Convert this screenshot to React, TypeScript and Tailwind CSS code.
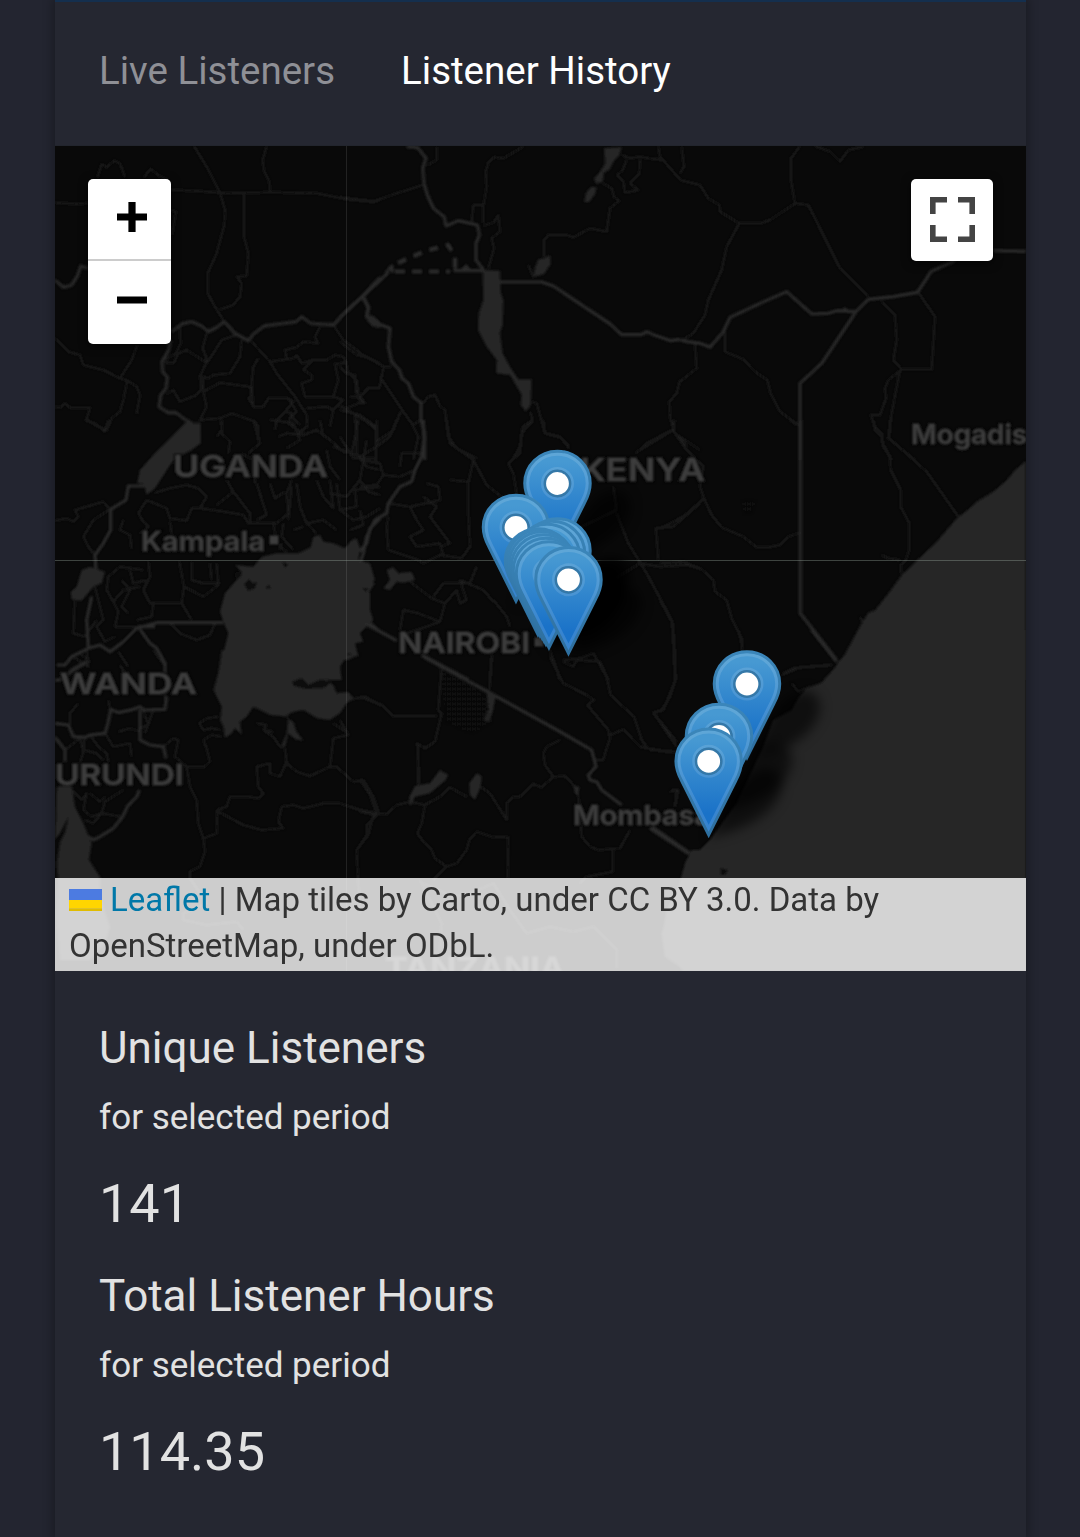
import React from "react";

type RegionData = {
  at: string;
  water?: string;
  border?: string;
  minor?: string;
};

/* Map line work, split in regions; every region is drawn at a third of its own units. */
const regions: RegionData[] = [
  {
    at: "translate(40 140) scale(0.33333)",
    water: "M395 900L425 870L455 850L475 848L482 900Z M985 525L1000 530L1020 545V565L995 558L980 540Z",
    border:
      "M45 420L70 442L95 435L112 408L122 378L145 385 M395 575L425 552L455 545L485 558L505 575L530 562L553 545L585 580L625 602L640 582L672 558L730 550L768 545L785 530L812 550L880 555L922 510L968 468L1020 412 M968 468L985 500L980 530L1000 545 M392 600L385 632L366 665L368 695L382 712L378 745L362 765L357 800L385 818L408 818L430 835L458 852",
    minor:
      "M462 18L500 80L540 158L555 210L553 255L530 340L503 400L503 460L525 500L553 545 M680 18L668 60L672 92L688 125L690 158 M45 188L110 192L145 190 M393 150L470 153L560 160L700 157L830 160L920 178L1000 186L1020 180 M612 160L612 290L625 340L620 408L590 410L605 430L600 470L580 495L540 508 M172 112L185 72L200 82L222 62L240 70L255 112 M312 112L332 86L355 106L380 118 M393 210L408 215L396 285 M45 595L85 635L120 645L130 675L190 690L240 715L275 660L292 615 M240 715L262 722L250 780L240 815L215 835L200 870L165 855L140 838L150 803L90 803L75 790L60 803L45 800 M262 722L290 740L300 765L290 822 M420 560L422 610L408 640L380 655L378 668L402 668L415 640L440 630L490 662L500 665 M500 580L488 625L498 650L500 665L480 710L485 745L470 765L420 785L400 750L380 762 M590 585L545 600L520 640L500 670 M605 600L600 650L570 700L520 705L505 715L490 710L490 755L500 750L540 728L630 740L635 765L625 775L640 798 M490 755L500 800L480 840L540 835L575 820L645 845L655 860V900 M635 605L690 665L710 700L765 770L800 825L802 860L780 875L745 850L755 820L735 815L760 785L745 775L685 775L670 800L640 800L635 730L640 680L655 655 M690 665L760 655L770 645L785 670L820 660L860 660L885 645L910 650L918 668L885 672L895 720L880 770L910 780L880 810L870 860 M740 655L735 630L770 622L790 605L835 610L825 590L840 560 M820 660L790 690L815 705L815 720L785 730L795 770L880 770 M880 555L910 600L950 630L975 650L1020 670 M918 668L925 700L950 720L955 760L970 790L950 770L930 770 M920 808L980 845L1010 870V900 M955 840L945 900 M800 805L860 800L880 810 M705 870L710 840L740 812 M545 840V870L530 890 M745 775L770 815L755 830L780 855 M1020 745L985 745L960 770 M715 890L740 880L790 885L830 870L870 900",
  },
  {
    at: "translate(340 140) scale(0.33333)",
    water:
      "M792 25L845 22L838 45L820 65L808 90L792 98L788 125L768 132L762 115L780 95L795 70Z M738 160L752 140L770 142L765 162L748 186L732 186Z M595 358L612 355L630 345L632 372L612 402L580 412L585 382Z M428 390L480 392L482 455L490 480L488 555L480 580L488 640L510 680L535 718H575L572 795L558 815L542 795L545 765L510 705L468 700L470 660L440 620L414 570L416 520L430 480Z M80 530L98 526L122 548L105 560L88 548Z",
    border:
      "M200 20L232 22L258 55L248 85L252 130L262 165L280 205L312 230L318 258L355 242L412 255L418 285L408 310L408 360L432 392 M345 376L345 392H430 M365 392L378 378L388 392 M0 532L145 398 M138 398L155 378L158 398 M480 426H605L640 438L740 505L808 550L845 584H905L920 575L940 584L992 602L1020 598 M68 468L85 505L80 530L110 550L150 565L145 620L155 665L178 690L186 715L205 730L220 770L243 788V840L254 880V960",
    minor:
      "M550 20L490 55L462 52L445 68L437 95L440 140L430 200L430 250 M0 172L100 184L170 160L248 135 M290 20V60L262 76 M430 195H400L395 245 M430 257L460 248L475 225L480 275L455 295L462 325L445 385 M612 350L612 300L625 285H680L700 292L750 265L800 275L810 205L837 183L822 170L815 145L790 130 M845 45L870 55L900 50L925 55L970 60 M900 60L898 100L870 130L895 150L855 158L850 125L832 105L848 90L860 60 M955 20L960 50L1020 118 M565 375L580 412 M0 605L50 645L80 650L130 680H155 M0 680L18 700L45 705L48 755L75 788L55 790L18 805L0 798 M0 810L60 825L108 860V960 M130 685L118 745H85L65 765 M120 710L190 815L215 850L235 890L220 960 M240 800L265 770L285 765L300 798L315 810L325 890L350 925L410 955 M240 800V840L220 855 M182 815L160 870L110 905 M575 785L590 790L615 880L660 892L688 918 M570 815L578 840L548 860L540 920L520 955 M1020 720L1010 760L988 785L990 830L1000 868L920 910L888 940 M45 820L48 880L35 940 M0 890L40 955H110",
  },
  {
    at: "translate(680 140) scale(0.33333)",
    border:
      "M0 600L22 605L60 610L90 622L130 575L150 532L240 490L320 455L395 522L445 520L470 512L528 515L565 478L640 470L712 457L740 415L752 395L825 362 M528 515L425 670L360 730V960 M940 332L1038 334 M490 505L505 515",
    minor:
      "M0 120L60 135L85 175L118 195L120 215L178 250H240L270 240L345 190L385 195L430 285L480 385L565 470 M178 250L140 320L125 390L85 480L75 525L40 580L10 598 M345 190L333 120V55L360 18 M405 18L450 35L480 65L505 30L550 20 M5 20L12 80L0 100 M135 560V635L190 658L225 695L262 720L272 760L300 815L355 855 M45 612L50 685L0 725 M605 485L645 525L650 600L640 660L665 688H755L765 530L715 457 M665 688L625 720L615 745L618 775L600 825L572 825L585 860L605 880L608 910L635 960 M660 690L635 820L625 895L705 960 M0 890L20 920",
  },
  {
    at: "translate(40 420) scale(0.33333)",
    water:
      "M440 5L460 15L482 8V70L455 90L400 120L345 205L320 225L312 192L292 188L300 150L340 105Z M125 450L150 440L195 455L185 490L160 500L125 542L95 538L92 515L110 500Z M585 435L640 440L665 410L710 400L775 400L812 382L820 350L840 345L850 365L880 370L915 385L935 360L950 355L960 385L955 420L990 430L1005 480L975 500L990 520V570L1000 600L960 640L970 665L945 670L955 710L925 700L900 740L905 780H530L545 720L565 640L552 610L540 575L555 520L590 480L605 455Z",
    border:
      "M318 198H265L258 240L212 268V330L190 370L165 405L168 450 M155 530L140 600L145 680 M50 735L75 735L95 710L145 685L180 675L210 695L250 665L290 625L350 608H550 M300 628L330 670L350 685L375 730V780 M295 620H345 M1020 295L990 325L980 370L958 395 M985 605L1020 635",
    minor:
      "M135 0L165 10L195 35L205 0 M45 302L80 295L100 305L115 290L105 270L190 245L210 268 M210 268L160 300L130 350L145 380L160 400 M320 240L380 265L390 295L440 302L455 265L480 265L500 230L475 205L440 195L390 205L345 218 M320 240L295 280L310 305L325 320L300 340 M250 300L240 330L270 345L275 385 M390 305L395 340 M480 265L555 275L610 285L625 310L660 310H710L745 280L740 220L755 180 M530 255L580 215L560 180 M580 215L630 280L632 310 M650 190L680 285L650 300 M690 190L705 235L735 215 M770 190L780 260L800 310L830 340 M800 310L850 300L890 330 M830 180L850 230L880 265L870 180 M890 190L900 270L950 260L945 210L1020 200 M900 270L940 300L980 290L1020 265 M870 220L920 230L960 180L985 215L1020 225 M860 90L870 140L900 180 M950 0V100L980 140L1020 150 M860 50L915 100 M980 60L960 180 M545 0V40L570 65L565 100 M640 0L660 70L625 100 M690 0L760 10L780 60L740 85 M800 20L770 50 M840 0L850 50 M700 310L710 370L740 395 M730 310L725 350L760 390 M790 320L760 330 M325 425L330 470L310 510L330 550L385 550H425L432 500L418 425 M432 500L490 530L535 495L530 430 M455 425V480L490 490H540 M425 550L455 600 M510 430L515 480 M310 450L240 440L205 470L200 510L220 545L250 510L300 500 M220 545L235 575L225 620L290 620 M340 550L335 590L290 600 M245 480L270 510L245 560L265 580 M270 450L280 490L320 480 M105 530L100 640L135 650 M165 500L190 600L170 620L195 665L225 650 M135 650L170 600 M390 610L420 640L470 660L510 645L525 610 M140 680L145 740L100 710 M235 695L265 740 M720 390L725 370 M755 200L745 300 M605 100L640 120L645 190 M880 80L960 110L1010 80V0 M930 330L970 315L960 270",
  },
  {
    at: "translate(360 420) scale(0.33333)",
    water:
      "M0 430L20 435L38 460L30 480L45 490L25 520V560L10 580L20 600L0 615Z M80 450L100 442L115 460L155 455L165 480L130 488L110 485L90 510L70 505L90 480Z",
    border:
      "M190 0L192 60L185 110L165 150L155 185L120 200L85 250L80 280L45 300L20 350L10 400L0 430 M15 610L110 662 M185 705L325 780",
    minor:
      "M260 0L270 70L340 120L380 195L430 235 M520 0L485 40L480 100L445 130L460 160L470 220 M550 0L555 40L600 50L628 85 M340 120L325 190L325 280L330 380L305 415L240 405L190 430L175 420L85 390L80 320L85 290 M85 250L150 260L240 240L235 200L200 190 M150 260L170 300L190 330L150 350L170 380L240 370L250 405 M190 230L230 260L210 290L270 370L240 380 M0 200L50 195L70 165L60 130L0 120 M70 165L120 170L165 150 M20 0L48 30V130 M110 0L90 50L50 80 M120 140L125 100L190 100 M270 180L325 185 M760 200L770 270L655 325 M770 280L805 370L860 460L935 600L945 700V780 M1020 250L940 320L888 325L895 420 M935 0L945 40L1020 90 M940 30L840 90 M750 485L840 430L900 440L980 435L1020 445 M120 630L130 570L175 580L240 605L255 550L215 535L170 500L150 485 M255 550L290 510L300 550L320 540L300 480 M240 605L200 620L140 640 M400 540L440 590L450 620 M300 480L370 510L400 545 M395 705L390 780 M570 690L600 780 M610 720L660 715L700 700L745 780 M220 530L250 490L330 490L350 440",
  },
  {
    at: "translate(660 420) scale(0.33333)",
    water: "M1098 122L1065 150L1040 180L1000 215L950 245L925 268L890 295L830 365L770 422L725 465L685 520L645 570L625 578L600 618L575 665L545 720L490 780H1098Z",
    border: "M421 0V580L530 720",
    minor:
      "M640 0L645 30L665 50L670 80L690 110L692 150L722 210V260L748 310V390L738 420L722 435V460 M690 0L688 55L800 155L895 290 M665 405L685 415L720 420 M0 50L38 30L45 0 M38 30L80 90L130 140L120 200L132 235L70 290L0 325 M132 235L155 285L185 322L250 350L290 382H325L360 375L385 350L420 338 M0 430L70 425L125 448L160 480L165 515L200 540L215 595L245 655V690 M0 540L38 610L42 700L48 780 M365 765L420 742L515 735 M600 590L610 610 M390 0L410 15",
  },
  {
    at: "translate(40 650) scale(0.33333)",
    water:
      "M545 0H900L920 15L960 12L925 30L905 30L890 75L850 85L880 105L890 130L925 125L940 145L920 160L900 190L870 210L830 205L790 180L760 185L735 200L760 215L770 245L790 272L765 268L745 250L735 290L725 285L740 250L745 200L690 195L640 170L620 200L600 215L605 255L585 235L575 250L555 265L550 230L540 210L545 170L530 140L520 120L535 70Z M50 410L95 405L105 470L130 520L155 580L147 630L180 680V740L210 830L195 880L150 930H60L50 800L55 700L50 640L60 575L75 545L85 500L60 550L45 570Z",
    border:
      "M45 92L75 85L95 60L140 35 M45 220L85 225L100 260L135 262L150 255L195 250L205 215L212 178L235 188L280 178L300 170L310 180L375 178L380 140 M300 180L300 270L330 285L370 290L378 325 M45 262L75 300V335 M298 420L290 440L262 470L248 500L220 535L180 560L160 570L145 560",
    minor:
      "M115 5L150 35L90 70 M240 45L265 85 M340 0L375 50V180 M115 160L90 190V225 M210 178L205 150 M310 180L325 225L300 235 M340 180L315 250 M75 300L120 265L130 305L120 340 M150 255L175 290L200 310L205 335 M195 250L220 290L270 280L275 320 M235 245L270 235L300 245 M135 262L130 300L170 310L190 330 M370 290L400 265L415 270L405 320L440 350H495L510 335L500 295L490 270L515 255L545 260 M540 240L515 235L490 240L478 220L500 205L535 200 M440 350L450 410L470 450L475 520L490 565L530 550L532 480L560 470L570 440H625L655 445L670 430L655 410L650 350L690 340V370L720 380L740 335L735 295 M735 335L770 365L810 378L870 350H890L940 395L970 390L1000 440L1015 485 M870 350L880 265L925 255L900 210 M925 250L880 220 M920 150L975 140L1020 165 M535 485L610 525L665 540L730 535L715 515L725 470L760 465L790 475L850 460H900L960 480L1020 492 M1000 495L985 555L950 600L955 700L960 790 M490 565L495 605L480 650L450 665V685L500 760L430 790V810L500 825L590 815L610 840 M95 420L125 450L140 430L130 480L155 500L185 490L160 520L135 510 M150 430L180 455L195 440 M185 490L195 455L250 420 M185 490L245 500 M670 240L700 260L720 290L735 290 M650 220L680 225L670 240L700 245",
  },
  {
    at: "translate(360 650) scale(0.33333)",
    water:
      "M380 130L408 135L398 185L388 215L370 210L385 180Z M240 360L265 375L255 392L210 430L165 440L150 470L148 440L165 408L210 400Z M350 370L365 378L362 410L345 450L330 435L328 400Z M640 405L658 412L655 440L645 430Z M995 600H1020V960L960 950L915 920L905 850L960 700L975 640Z",
    border: "M190 20L410 140L600 245L695 300L708 350L685 375L690 390L710 395L725 420L785 465 M875 530L990 610",
    minor:
      "M0 140L65 165L100 198H230 M245 50L235 180L245 190L225 275L195 295L172 280L178 400 M395 25L388 120 M175 280L175 410 M0 390L30 435L50 490L80 492L110 465L150 455L195 465L185 520L172 550L190 575L215 600L225 625L260 650L220 690 M0 485L50 495L20 525V555L0 585 M260 650L290 640L320 600L328 570L350 545L395 560L445 562L443 684 M195 465L240 440L270 412L320 440 M362 410L390 430L440 510V460L460 440H480L520 402L545 412L580 380L555 345L550 310L560 290L600 270 M580 380L615 378L645 410 M570 20L600 80L610 100L680 135L702 150L682 165L745 240L750 265L738 300L730 330L705 330 M745 258L790 238L840 290L920 305H960 M610 35L640 50L650 30L720 35L740 80L752 135L800 180L822 200L845 270L860 290 M945 0V95L910 180L880 188L950 275 M655 440L665 560L690 590L715 600L780 595L810 540 M758 600V665L680 680L660 700 M935 420L955 420L945 470 M190 700L280 740L330 730L400 700L450 780L500 850L570 830L640 845L700 830L740 870L770 900V955 M180 690L245 820L240 900",
  },
  {
    at: "translate(650 630) scale(0.33333)",
    water: "M625 0L600 60L565 95L545 135L510 160L470 175L445 205L425 240L370 270L340 350L260 520L180 630L150 660L115 680L100 720L85 770L50 840L40 900L60 980L100 1023H1128V0Z",
    border: "M485 0L560 95 M0 595L115 670",
    minor:
      "M70 0L75 150L60 200L35 240L10 248L80 350 M265 0L278 50 M400 130L430 115L545 105 M0 360L70 365 M60 485L80 480L75 530 M425 160L445 185L480 170",
  },
];

type Pt = { x: number; y: number };
/* Centre of each pin's white dot. */
const pins: Pt[] = [
  { x: 557.5, y: 483.5 },
  { x: 516, y: 527.5 },
  { x: 557.5, y: 551 },
  { x: 552, y: 553.5 },
  { x: 547, y: 556.5 },
  { x: 538, y: 561 },
  { x: 540, y: 562 },
  { x: 542, y: 564 },
  { x: 544, y: 567 },
  { x: 546, y: 570.5 },
  { x: 549, y: 574 },
  { x: 568.5, y: 579.8 },
  { x: 747, y: 684 },
  { x: 719, y: 736.5 },
  { x: 708.7, y: 761.3 },
];

function Pin({ x, y }: Pt) {
  return (
    <g transform={`translate(${x - 34.4} ${y - 34.8}) scale(2.75)`}>
      <path
        d="M12.5 .9C5.9 .9 .6 6.1 .6 12.6c0 2.6 .8 4.8 2.1 7.2L12.5 39.4 22.3 19.8c1.3-2.4 2.1-4.6 2.1-7.2C24.4 6.1 19.1 .9 12.5 .9Z"
        fill="url(#pinFill)"
        stroke="url(#pinEdge)"
        strokeWidth="1.1"
      />
      <path
        d="M12.5 2C6.5 2 1.7 6.7 1.7 12.6c0 2.4 .7 4.4 2 6.8L12.5 37 21.3 19.4c1.3-2.4 2-4.4 2-6.8C23.3 6.7 18.5 2 12.5 2Z"
        fill="none"
        stroke="#fff"
        strokeOpacity=".13"
        strokeWidth="1.1"
      />
      <circle cx="12.5" cy="12.65" r="5.5" fill="none" stroke="#fff" strokeOpacity=".12" strokeWidth="1" />
      <circle cx="12.5" cy="12.65" r="4.6" fill="#fff" stroke="#3578a8" strokeWidth=".9" />
    </g>
  );
}

type Label = { text: string; x: number; y: number; size: number; width: number };
const labels: Label[] = [
  { text: "UGANDA", x: 173, y: 476.5, size: 30, width: 155 },
  { text: "KENYA", x: 580, y: 480.5, size: 31, width: 125 },
  { text: "WANDA", x: 60, y: 694, size: 29, width: 137 },
  { text: "URUNDI", x: 55, y: 785, size: 28.5, width: 129 },
  { text: "NAIROBI", x: 398, y: 652.5, size: 29, width: 132 },
  { text: "Kampala", x: 141, y: 551, size: 26.5, width: 124 },
  { text: "Mombasa", x: 573, y: 825, size: 26.5, width: 138 },
  { text: "Mogadis", x: 911, y: 444, size: 26.5, width: 116 },
  { text: "TANZANIA", x: 385, y: 979, size: 30, width: 180 },
];

function MapCanvas() {
  return (
    <svg className="block h-[825px] w-[971px]" viewBox="55 146 971 825" aria-label="Listener map">
      <defs>
        <linearGradient id="pinFill" x1="0" y1="0" x2="0" y2="1">
          <stop offset="0.1" stopColor="#4799d2" />
          <stop offset="0.8" stopColor="#1a72c8" />
          <stop offset="1" stopColor="#1a72c8" />
        </linearGradient>
        <linearGradient id="pinEdge" x1="0" y1="0" x2="0" y2="1">
          <stop offset="0" stopColor="#3b86ba" />
          <stop offset="1" stopColor="#2e6f9f" />
        </linearGradient>
        <filter id="soft" x="-40%" y="-40%" width="180%" height="180%">
          <feGaussianBlur stdDeviation="6" />
        </filter>
        <filter id="tile" x="0" y="0" width="100%" height="100%">
          <feGaussianBlur stdDeviation="0.9" />
        </filter>
        <pattern id="dots" width="5" height="5" patternUnits="userSpaceOnUse">
          <circle cx="1.5" cy="1.5" r=".9" fill="#191919" />
          <circle cx="4" cy="4" r=".9" fill="#191919" />
        </pattern>
      </defs>
      <rect x="55" y="146" width="971" height="825" fill="#090909" />
      <g filter="url(#tile)">
        {regions.map((r) => (
          <g key={r.at} transform={r.at} fill="none" strokeLinejoin="round">
            <path d={r.minor} stroke="#1c1c1c" strokeWidth="6" />
          </g>
        ))}
        {regions.map((r) => (
          <g key={r.at} transform={r.at} fill="none" strokeLinejoin="round">
            <path d={r.border} stroke="#2a2a2a" strokeWidth="9.5" />
            {r.water && <path d={r.water} fill="#262626" />}
          </g>
        ))}
        <path d="M395 271.5H450" stroke="#2a2a2a" strokeWidth="4" strokeDasharray="10 7" />
        <path d="M398 263L425 251L448 245L455 256L455 268" fill="none" stroke="#2a2a2a" strokeWidth="4.5" strokeDasharray="9 8" />
        <path d="M442 672L470 680L488 700L492 722L472 734L445 722Z" fill="url(#dots)" />
        <path d="M742 500H756L752 514H744Z" fill="url(#dots)" />
        <path
          d="M244 584l5-5 3 4 5-1-2 6-7 3z M292 682l10-4 6 7 14-6 8 4-6 5-18 1-12-3z M236 571l6 2-2 5-6-1z M265 588l4-3 2 4z M282 562l6 2-3 4z M720 868l8 2 -3 5-4 0z M362 588l6 0-2 4z"
          fill="#090909"
        />
        <g fill="#3e3e3e" stroke="#0b0b0b" strokeWidth="3" paintOrder="stroke" fontFamily='Inter, "Open Sans", sans-serif' fontWeight="600">
          {labels.map((l) => (
            <text key={l.text} x={l.x} y={l.y} fontSize={l.size} textLength={l.width} lengthAdjust="spacingAndGlyphs">
              {l.text}
            </text>
          ))}
          <rect x="270" y="536" width="8" height="8" />
          <rect x="535" y="638" width="8" height="8" />
        </g>
      </g>
      <path d="M346.5 146V971" stroke="#fff" strokeOpacity=".1" />
      <path d="M55 560.5H1026" stroke="#9fb0a4" strokeOpacity=".36" />
      {pins.map((p, i) => (
        <path
          key={i}
          transform={`translate(${p.x} ${p.y + 77})`}
          d="M0 0L22-42C34-62 54-76 66-68C80-58 72-34 50-20C36-10 18-6 0 0Z"
          fill="#000"
          fillOpacity=".6"
          filter="url(#soft)"
        />
      ))}
      {pins.map((p, i) => (
        <Pin key={i} x={p.x} y={p.y} />
      ))}
    </svg>
  );
}

function Stat({ title, value }: { title: string; value: string }) {
  return (
    <section className="h-[248px]">
      <h2 className="h-[54px] text-[44px] leading-[54px]">{title}</h2>
      <p className="mt-[21px] h-[44px] text-[35px] leading-[44px]">for selected period</p>
      <p className="mt-[32px] h-[64px] text-[54px] leading-[64px]">{value}</p>
    </section>
  );
}

export default function App() {
  return (
    <div className="flex h-[1537px] w-[1080px] justify-center overflow-hidden bg-[#232530] pl-px font-['Roboto',sans-serif]">
      <main className="h-full w-[971px] bg-[#252731] text-[#e2e2e2] shadow-[0_0_10px_2px_rgba(0,0,0,0.3)]">
        <nav className="flex h-[146px] gap-[66px] border-t-2 border-[#142f4e] border-b border-b-[#22252d] pl-[44px] pt-[43px] text-[38.5px] leading-[52px]">
          <a className="text-[#8f9096]">Live Listeners</a>
          <a className="text-white">Listener History</a>
        </nav>
        <div className="relative h-[825px] overflow-hidden">
          <MapCanvas />
          <div className="absolute left-[33px] top-[33px] flex h-[165px] w-[83px] flex-col overflow-hidden rounded-[5px] bg-white shadow-[0_2px_10px_rgba(0,0,0,0.65)]">
            <button aria-label="Zoom in" className="h-[82px] border-b-2 border-[#ccc] pl-[29px]">
              <svg className="mt-[-4px] h-[30px] w-[30px]" viewBox="0 0 30 30">
                <path d="M0 15H30M15 0V30" stroke="#000" strokeWidth="7.2" />
              </svg>
            </button>
            <button aria-label="Zoom out" className="h-[83px] pl-[29px]">
              <svg className="mt-[-6px] h-[30px] w-[30px]" viewBox="0 0 30 30">
                <path d="M0 15H30" stroke="#000" strokeWidth="7" />
              </svg>
            </button>
          </div>
          <button
            aria-label="Full screen"
            className="absolute right-[33px] top-[33px] flex h-[82px] w-[82px] items-center justify-center rounded-[5px] bg-white pb-[2px] shadow-[0_2px_10px_rgba(0,0,0,0.65)]"
          >
            <svg className="h-[45px] w-[45px]" viewBox="0 0 45 45" fill="none" stroke="#444" strokeWidth="5.6">
              <path d="M2.8 17V2.8H17M28 2.8H42.2V17M42.2 28V42.2H28M17 42.2H2.8V28" />
            </svg>
          </button>
          <div className="absolute bottom-0 left-0 h-[93px] w-full bg-white/80 px-[14px] text-[33px] leading-[46px] text-[#333]">
            <p className="-mt-px">
              <svg className="mr-[8px] inline-block h-[22px] w-[33px] align-[0px]" viewBox="0 0 12 8">
                <path fill="#4C7BE1" d="M0 0h12v4H0z" />
                <path fill="#FFD500" d="M0 4h12v3H0z" />
                <path fill="#E0BC00" d="M0 7h12v1H0z" />
              </svg>
              <a className="text-[#0078a8]">Leaflet</a> | Map tiles by Carto, under CC BY 3.0. Data by
              <br />
              OpenStreetMap, under ODbL.
            </p>
          </div>
        </div>
        <div className="pl-[44px] pt-[50px]">
          <Stat title="Unique Listeners" value="141" />
          <Stat title="Total Listener Hours" value="114.35" />
        </div>
      </main>
    </div>
  );
}
